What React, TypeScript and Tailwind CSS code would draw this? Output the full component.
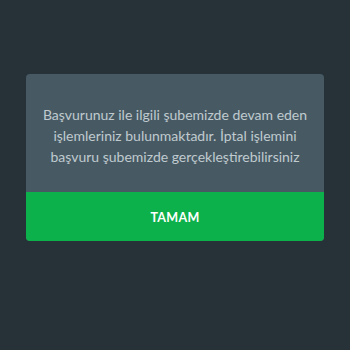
export default function App() {
  return (
    <div
      className="w-[350px] h-[350px] bg-[#263238] flex items-start justify-center pt-[74px]"
      style={{ fontFamily: "Lato, 'Noto Sans', sans-serif" }}
    >
      <div className="w-[298px] rounded-[4px] overflow-hidden bg-[#475a64] flex flex-col">
        <p className="h-[118px] flex items-center justify-center px-4 pt-[5px] text-center text-[14px] leading-[21px] text-[#c0cacf]">
          Başvurunuz ile ilgili şubemizde devam eden işlemleriniz bulunmaktadır. İptal işlemini başvuru şubemizde gerçekleştirebilirsiniz
        </p>
        <button className="h-[49px] pt-[3px] bg-[#0db14b] text-white text-[12.5px] font-bold tracking-[0.3px]">
          TAMAM
        </button>
      </div>
    </div>
  )
}
